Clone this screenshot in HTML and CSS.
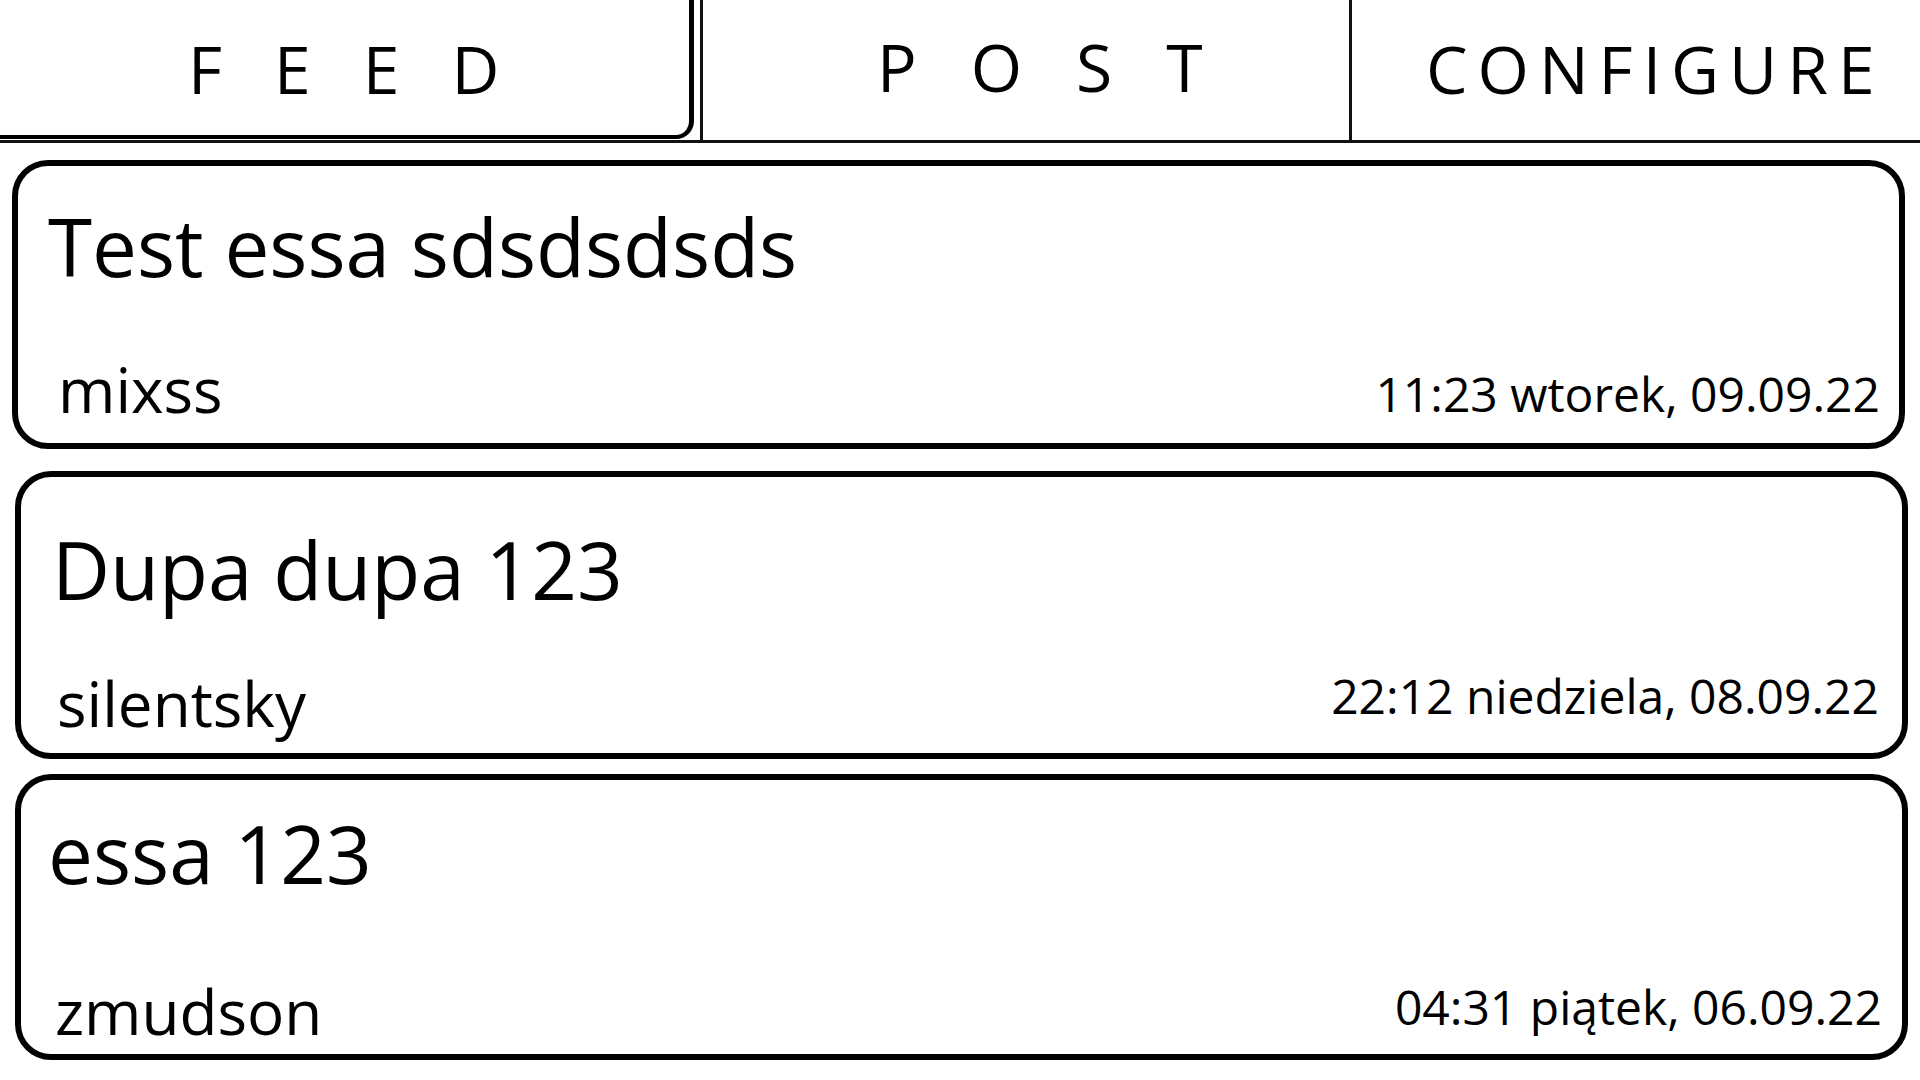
FILE: index.html
```html
<!DOCTYPE html>
<html lang="pl">
<head>
<meta charset="utf-8">
<title>Feed</title>
<link rel="stylesheet" href="styles.css">
</head>
<body>
<header class="tabs">
  <div class="tab tab--feed">FEED</div>
  <div class="tab tab--post">POST</div>
  <div class="tab tab--configure">CONFIGURE</div>
</header>
<main class="feed">
  <article class="post post--1">
    <h2 class="post__title">Test essa sdsdsdsds</h2>
    <div class="post__meta">
      <span class="post__author">mixss</span>
      <span class="post__date">11:23 wtorek, 09.09.22</span>
    </div>
  </article>
  <article class="post post--2">
    <h2 class="post__title">Dupa dupa 123</h2>
    <div class="post__meta">
      <span class="post__author">silentsky</span>
      <span class="post__date">22:12 niedziela, 08.09.22</span>
    </div>
  </article>
  <article class="post post--3">
    <h2 class="post__title">essa 123</h2>
    <div class="post__meta">
      <span class="post__author">zmudson</span>
      <span class="post__date">04:31 piątek, 06.09.22</span>
    </div>
  </article>
</main>
</body>
</html>
```
FILE: styles.css
```css
html, body {
  margin: 0;
  padding: 0;
  background: #fff;
}

body {
  width: 1920px;
  height: 1080px;
  overflow: hidden;
  font-family: "Open Sans", "Noto Sans", sans-serif;
  color: #000;
}

/* ---------- tabs ---------- */
.tabs {
  display: flex;
  align-items: flex-start;
  height: 143px;
  box-sizing: border-box;
  border-bottom: 3px solid #111;
}

.tab {
  box-sizing: border-box;
  font-size: 66px;
  line-height: 66px;
  font-weight: 400;
  white-space: nowrap;
  padding-top: 35px;
}

.tab--feed {
  width: 694px;
  height: 139px;
  margin-right: 6px;
  border-right: 5px solid #000;
  border-bottom: 4px solid #000;
  border-bottom-right-radius: 18px;
  padding-left: 188px;
  letter-spacing: 52px;
}

.tab--post {
  width: 652px;
  height: 140px;
  border-left: 3px solid #111;
  border-right: 3px solid #111;
  padding-left: 174px;
  padding-top: 33px;
  letter-spacing: 54px;
}

.tab--configure {
  flex: 1;
  height: 140px;
  padding-left: 74px;
  letter-spacing: 10px;
}

/* ---------- posts ---------- */
.feed {
  display: flex;
  flex-direction: column;
}

.post {
  box-sizing: border-box;
  width: 1893px;
  border: 6px solid #000;
  border-radius: 36px;
  display: flex;
  flex-direction: column;
  --date-lift: 2px;
  --author-shift: 10px;
}

.post--1 {
  margin: 17px 0 0 12px;
  height: 289px;
  padding: 40px 19px 23px 30px;
}

.post--2 {
  margin: 22px 0 0 15px;
  height: 288px;
  padding: 52px 23px 19px 31px;
  --date-lift: 14px;
  --author-shift: 5px;
}

.post--3 {
  margin: 15px 0 0 15px;
  height: 286px;
  padding: 33px 20px 12px 27px;
  --date-lift: 11px;
  --author-shift: 7px;
}

.post__title {
  margin: 0;
  font-size: 80px;
  line-height: 80px;
  font-weight: 400;
  white-space: nowrap;
}

.post__meta {
  margin-top: auto;
  display: flex;
  justify-content: space-between;
  align-items: flex-end;
}

.post__author {
  font-size: 62px;
  line-height: 62px;
  margin-left: var(--author-shift);
}

.post__date {
  font-size: 48px;
  line-height: 48px;
  margin-bottom: var(--date-lift);
  white-space: nowrap;
}
```
